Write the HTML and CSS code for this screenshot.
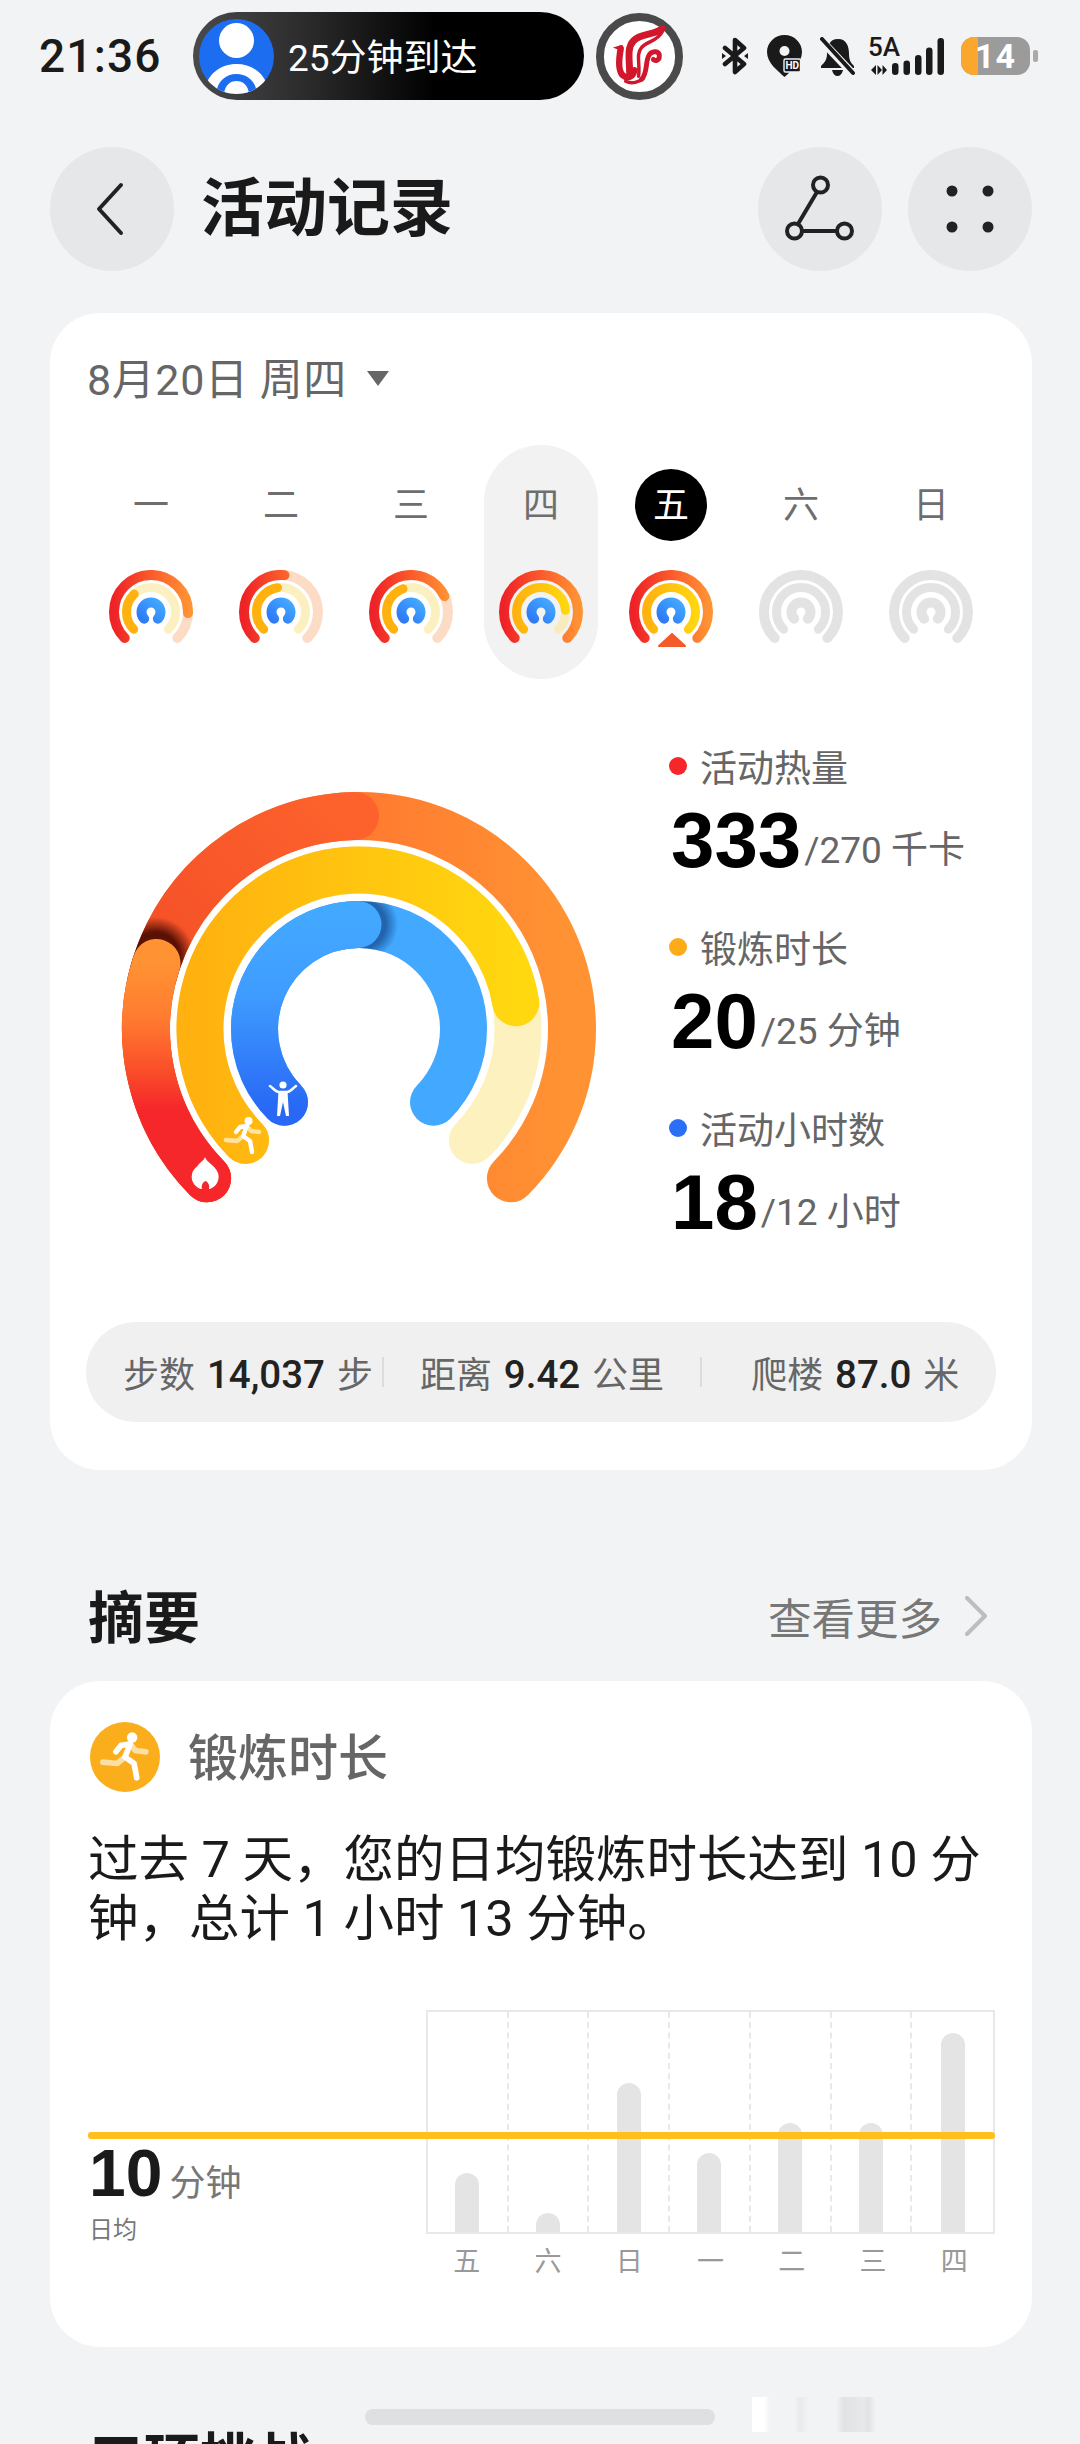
FILE: index.html
```html
<!DOCTYPE html>
<html lang="zh-CN">
<head>
    <meta charset="UTF-8">
    <meta name="viewport" content="width=device-width, initial-scale=1.0">
    <title>活动记录</title>
    <link rel="stylesheet" href="styles.css">
</head>
<body>
    <!-- shared shapes and gradients -->
    <svg class="defs" aria-hidden="true">
        <defs>
            <linearGradient id="mini-red" x1="0" y1="0" x2="1" y2="0">
                <stop offset="0" stop-color="#ee2327"/>
                <stop offset="0.5" stop-color="#fb5a2b"/>
                <stop offset="1" stop-color="#ff9233"/>
            </linearGradient>
            <linearGradient id="mini-yellow" x1="0" y1="0" x2="1" y2="0">
                <stop offset="0" stop-color="#ffb20f"/>
                <stop offset="1" stop-color="#ffd60f"/>
            </linearGradient>
            <linearGradient id="mini-blue" x1="0" y1="1" x2="1" y2="0">
                <stop offset="0" stop-color="#2f7bf6"/>
                <stop offset="1" stop-color="#43a8ff"/>
            </linearGradient>
            <path id="m-outer" pathLength="100" d="M18.7 68A37 37 0 1 1 71.3 68"/>
            <path id="m-middle" pathLength="100" d="M27.6 59.2A24.5 24.5 0 1 1 62.4 59.2"/>
            <path id="m-inner" d="M38.2 48.7A9.5 9.5 0 1 1 51.8 48.7"/>
            <symbol id="runner" viewBox="0 0 40 40">
                <g fill="none" stroke="#fff" stroke-width="4.4" stroke-linecap="round" stroke-linejoin="round">
                    <path d="M24 10L20 20M20 20L27 25L29 36M24 10L17 11L13 16"/>
                    <path opacity="0.6" d="M20 20L14 25L3 24M24 10L28 15L36 16"/>
                </g>
                <circle cx="25.5" cy="5" r="4" fill="#fff"/>
            </symbol>
        </defs>
    </svg>

    <div class="status-bar">
        <span class="clock">21:36</span>
        <div class="trip-pill">
            <svg class="trip-avatar" viewBox="0 0 75 75">
                <clipPath id="avatar-clip"><circle cx="37.5" cy="37.5" r="37.5"/></clipPath>
                <g clip-path="url(#avatar-clip)">
                    <rect width="75" height="75" fill="#1c6df0"/>
                    <circle cx="37.5" cy="21.5" r="17.5" fill="#fff"/>
                    <path fill="#fff" d="M4 75C8 54 22 45 37.5 45C53 45 67 54 71 75Z"/>
                    <path fill="#1c6df0" d="M17 75C18 62 27 55 37.5 55C48 55 57 62 58 75Z"/>
                    <path fill="#fff" d="M25 75C26 66 31 62 37.5 62C44 62 49 66 50 75Z"/>
                </g>
            </svg>
            <span class="trip-text">25分钟到达</span>
        </div>
        <div class="airline-badge">
            <svg viewBox="6 8 88 88" width="87" height="87">
                <circle cx="50" cy="52" r="40" fill="#fff" stroke="#4a4a4a" stroke-width="8"/>
                <g fill="none" stroke="#d2162b" stroke-linecap="round">
                    <path stroke-width="6.5" d="M31 44C29 55 28 66 33 71C38 75 43 73 45 66"/>
                    <path stroke-width="7" d="M40 68C40 55 37 43 44 36C52 28 64 31 73 24"/>
                    <path stroke-width="3.5" d="M49 72C51 60 46 50 52 43C58 36 68 37 73 27"/>
                    <path stroke-width="5" d="M52 75C58 70 56 58 59 52C62 45 71 46 70 52C70 56 66 57 64 55"/>
                    <path stroke-width="3.5" d="M36 77C42 80 50 78 54 74"/>
                </g>
                <path fill="#d2162b" d="M23 43L33 40L33 47Z"/>
            </svg>
        </div>
        <svg class="ic-bluetooth" viewBox="0 0 26 38">
            <path fill="none" stroke="#1a1a1a" stroke-width="4.6" stroke-linejoin="round" stroke-linecap="round" d="M3 11L22 27L13 35V3L22 11L3 27"/>
            <path fill="#1a1a1a" d="M0 16L4 19L0 22ZM26 16L22 19L26 22Z"/>
        </svg>
        <svg class="ic-location" viewBox="0 0 35 42">
            <path fill="#1a1a1a" d="M17.5 0C27 0 35 7.5 35 17C35 28 24 36 17.5 42C11 36 0 28 0 17C0 7.5 8 0 17.5 0Z"/>
            <circle cx="17.5" cy="16" r="5" fill="#f2f3f5"/>
            <rect x="17" y="24" width="16.5" height="13" rx="1.5" fill="#1a1a1a" stroke="#f2f3f5" stroke-width="1.4"/>
            <text x="25.2" y="34.2" class="hd-text">HD</text>
        </svg>
        <svg class="ic-bell" viewBox="0 0 35 39">
            <path fill="#1a1a1a" d="M18 2C9 2 7 10 7 17C7 23 4 26 1 29V31H34V29C31 26 29 23 29 17C29 10 27 2 18 2Z"/>
            <path fill="#1a1a1a" d="M12 33H23C22 37 20 39 17.5 39C15 39 13 37 12 33Z"/>
            <path stroke="#f2f3f5" stroke-width="8" d="M-1 1L34 38"/>
            <path stroke="#1a1a1a" stroke-width="4" stroke-linecap="round" d="M2 2L33 36"/>
        </svg>
        <svg class="ic-signal" viewBox="0 -8 78 48">
            <text x="0" y="20" class="net-text">5A</text>
            <path fill="#1a1a1a" d="M3 34L8 29V39ZM14 34L9.500 29V39ZM14.500 29L19 34L14.500 39Z"/>
            <rect x="24" y="27" width="6.500" height="12" rx="3.200" fill="#1a1a1a"/>
            <rect x="35.500" y="24.500" width="6.500" height="14.500" rx="3.200" fill="#1a1a1a"/>
            <rect x="47" y="19" width="6.500" height="20" rx="3.200" fill="#1a1a1a"/>
            <rect x="58" y="11.500" width="6.500" height="27.500" rx="3.200" fill="#1a1a1a"/>
            <rect x="69.500" y="2" width="6.500" height="37" rx="3.200" fill="#1a1a1a"/>
        </svg>
        <div class="battery">
            <div class="battery-fill"></div>
            <span class="battery-num">14</span>
        </div>
        <div class="battery-nub"></div>
    </div>

    <div class="nav-bar">
        <button class="round-btn back-btn">
            <svg width="32" height="54" viewBox="0 0 32 54"><path fill="none" stroke="#222" stroke-width="4" stroke-linecap="round" stroke-linejoin="round" d="M27 3L5 27L27 51"/></svg>
        </button>
        <h1 class="page-title">活动记录</h1>
        <button class="round-btn share-btn">
            <svg width="70" height="70" viewBox="0 0 70 70" fill="none" stroke="#222" stroke-width="4">
                <circle cx="35.500" cy="11" r="7.500"/>
                <circle cx="9.500" cy="57" r="7.500"/>
                <circle cx="59.500" cy="57" r="7.500"/>
                <path d="M32 18L13 50M17 57H52"/>
            </svg>
        </button>
        <button class="round-btn">
            <svg width="50" height="50" viewBox="0 0 50 50" fill="#222">
                <circle cx="7" cy="7" r="5.500"/><circle cx="43" cy="7" r="5.500"/>
                <circle cx="7" cy="43" r="5.500"/><circle cx="43" cy="43" r="5.500"/>
            </svg>
        </button>
    </div>

    <section class="card activity-card">
        <div class="date-row">
            <span>8月20日 周四</span>
            <span class="date-caret"></span>
        </div>

        <div class="week">
            <div class="day">
                <span class="day-label">一</span>
                <svg class="mini-ring" viewBox="0 0 90 84">
                    <use href="#m-outer" stroke="#fcdcc4"/>
                    <use href="#m-outer" stroke="url(#mini-red)" stroke-dasharray="84 100"/>
                    <use href="#m-middle" stroke="#fdf0c0" stroke-width="9"/>
                    <use href="#m-middle" stroke="#ffb20f" stroke-width="9" stroke-dasharray="34 100"/>
                    <use href="#m-inner" stroke="url(#mini-blue)" stroke-width="10"/>
                </svg>
            </div>
            <div class="day">
                <span class="day-label">二</span>
                <svg class="mini-ring" viewBox="0 0 90 84">
                    <use href="#m-outer" stroke="#fcdcc4"/>
                    <use href="#m-outer" stroke="url(#mini-red)" stroke-dasharray="52 100"/>
                    <use href="#m-middle" stroke="#fdf0c0" stroke-width="9"/>
                    <use href="#m-middle" stroke="#ffb20f" stroke-width="9" stroke-dasharray="47 100"/>
                    <use href="#m-inner" stroke="url(#mini-blue)" stroke-width="10"/>
                </svg>
            </div>
            <div class="day">
                <span class="day-label">三</span>
                <svg class="mini-ring" viewBox="0 0 90 84">
                    <use href="#m-outer" stroke="#fcdcc4"/>
                    <use href="#m-outer" stroke="url(#mini-red)" stroke-dasharray="74 100"/>
                    <use href="#m-middle" stroke="#fdf0c0" stroke-width="9"/>
                    <use href="#m-middle" stroke="#ffb20f" stroke-width="9" stroke-dasharray="43 100"/>
                    <use href="#m-inner" stroke="url(#mini-blue)" stroke-width="10"/>
                </svg>
            </div>
            <div class="day day-selected">
                <span class="day-label">四</span>
                <svg class="mini-ring" viewBox="0 0 90 84">
                    <use href="#m-outer" stroke="url(#mini-red)"/>
                    <use href="#m-middle" stroke="#f8ebbe" stroke-width="9"/>
                    <use href="#m-middle" stroke="url(#mini-yellow)" stroke-width="9" stroke-dasharray="82 100"/>
                    <use href="#m-inner" stroke="url(#mini-blue)" stroke-width="10"/>
                </svg>
            </div>
            <div class="day">
                <span class="day-label day-today">五</span>
                <svg class="mini-ring" viewBox="0 0 90 84">
                    <use href="#m-outer" stroke="url(#mini-red)"/>
                    <use href="#m-middle" stroke="url(#mini-yellow)" stroke-width="9"/>
                    <use href="#m-inner" stroke="url(#mini-blue)" stroke-width="10"/>
                    <path d="M46 64L59 76H33Z" fill="#f55a2b" stroke="#f55a2b" stroke-width="2" stroke-linejoin="round"/>
                </svg>
            </div>
            <div class="day">
                <span class="day-label">六</span>
                <svg class="mini-ring" viewBox="0 0 90 84">
                    <use href="#m-outer" stroke="#e3e3e3"/>
                    <use href="#m-middle" stroke="#e3e3e3" stroke-width="9"/>
                    <use href="#m-inner" stroke="#e3e3e3" stroke-width="10"/>
                </svg>
            </div>
            <div class="day">
                <span class="day-label">日</span>
                <svg class="mini-ring" viewBox="0 0 90 84">
                    <use href="#m-outer" stroke="#e3e3e3"/>
                    <use href="#m-middle" stroke="#e3e3e3" stroke-width="9"/>
                    <use href="#m-inner" stroke="#e3e3e3" stroke-width="10"/>
                </svg>
            </div>
        </div>

        <div class="rings-row">
            <svg class="big-rings" viewBox="0 0 480 420" fill="none" stroke-linecap="round">
                <defs>
                    <linearGradient id="r-base" gradientUnits="userSpaceOnUse" x1="240" y1="0" x2="440" y2="0">
                        <stop offset="0" stop-color="#ff7a30"/>
                        <stop offset="1" stop-color="#ff9233"/>
                    </linearGradient>
                    <linearGradient id="r-left" gradientUnits="userSpaceOnUse" x1="40" y1="200" x2="240" y2="30">
                        <stop offset="0" stop-color="#f44f28"/>
                        <stop offset="1" stop-color="#fd622c"/>
                    </linearGradient>
                    <linearGradient id="r-over" gradientUnits="userSpaceOnUse" x1="0" y1="174" x2="0" y2="320">
                        <stop offset="0" stop-color="#ff9233"/>
                        <stop offset="0.38" stop-color="#ff7b30"/>
                        <stop offset="0.72" stop-color="#fb5029"/>
                        <stop offset="1" stop-color="#f5272a"/>
                    </linearGradient>
                    <linearGradient id="r-yellow" gradientUnits="userSpaceOnUse" x1="80" y1="0" x2="400" y2="0">
                        <stop offset="0" stop-color="#ffb20f"/>
                        <stop offset="1" stop-color="#ffd80f"/>
                    </linearGradient>
                    <linearGradient id="r-blue" gradientUnits="userSpaceOnUse" x1="0" y1="320" x2="0" y2="130">
                        <stop offset="0" stop-color="#2868f5"/>
                        <stop offset="0.6" stop-color="#3f9cff"/>
                        <stop offset="1" stop-color="#43a8ff"/>
                    </linearGradient>
                    <radialGradient id="s-red">
                        <stop offset="0.62" stop-color="#4a0a00" stop-opacity="0.9"/>
                        <stop offset="1" stop-color="#4a0a00" stop-opacity="0"/>
                    </radialGradient>
                    <radialGradient id="s-blue">
                        <stop offset="0.66" stop-color="#123f80" stop-opacity="0.65"/>
                        <stop offset="1" stop-color="#123f80" stop-opacity="0"/>
                    </radialGradient>
                    <mask id="outer-mask" maskUnits="userSpaceOnUse" x="0" y="0" width="480" height="420">
                        <path stroke="#fff" stroke-width="48" d="M88.100 389.300A213 213 0 1 1 391.900 389.300"/>
                    </mask>
                    <mask id="inner-mask" maskUnits="userSpaceOnUse" x="0" y="0" width="480" height="420">
                        <path stroke="#fff" stroke-width="47" d="M165.500 313.200A104.500 104.500 0 1 1 314.500 313.200"/>
                    </mask>
                </defs>

                <!-- activity calories, more than one lap -->
                <path stroke="url(#r-base)" stroke-width="48" d="M88.100 389.300A213 213 0 1 1 391.900 389.300"/>
                <path stroke="url(#r-left)" stroke-width="48" d="M88.100 389.300A213 213 0 0 1 236 27"/>
                <g mask="url(#outer-mask)">
                    <circle cx="36" cy="168" r="40" fill="url(#s-red)"/>
                </g>
                <path stroke="url(#r-over)" stroke-width="48" d="M88.100 389.300A213 213 0 0 1 37.500 174"/>

                <!-- workout minutes -->
                <path stroke="#fdf1c0" stroke-width="47" d="M126.600 351.400A159 159 0 1 1 353.400 351.400"/>
                <path stroke="url(#r-yellow)" stroke-width="47" d="M126.600 351.400A159 159 0 1 1 396.800 213.700"/>

                <!-- active hours, more than one lap -->
                <path stroke="#43a8ff" stroke-width="47" d="M165.500 313.200A104.500 104.500 0 1 1 314.500 313.200"/>
                <g mask="url(#inner-mask)">
                    <circle cx="243" cy="135.500" r="36" fill="url(#s-blue)"/>
                </g>
                <path stroke="url(#r-blue)" stroke-width="47" d="M165.500 313.200A104.500 104.500 0 0 1 239 135.500"/>

                <path fill="#fff" d="M86 368C88 374 96 376 99 384C102 393 94 400 90 400C91 396 89 393 86.500 392C84 393 82 396 83 400C78 400 71 393 73 385C74 380 78 378 80 375C83 372 85 371 86 368Z"/>
                <use href="#runner" x="104" y="327" width="40" height="40"/>
                <circle cx="164" cy="296" r="3.600" fill="#fff"/>
                <path stroke="#fff" stroke-width="2.600" d="M151 297C155 300 157 303 160 303H168C171 303 173 300 177 297"/>
                <path fill="#fff" d="M159.500 302H168.500L170 327H167L164 313L161 327H158Z"/>
            </svg>

            <div class="goals">
                <div class="goal">
                    <div class="goal-name"><i class="dot dot-red"></i>活动热量</div>
                    <div class="goal-value">333<span class="goal-target">/270 千卡</span></div>
                </div>
                <div class="goal">
                    <div class="goal-name"><i class="dot dot-yellow"></i>锻炼时长</div>
                    <div class="goal-value">20<span class="goal-target">/25 分钟</span></div>
                </div>
                <div class="goal">
                    <div class="goal-name"><i class="dot dot-blue"></i>活动小时数</div>
                    <div class="goal-value">18<span class="goal-target">/12 小时</span></div>
                </div>
            </div>
        </div>

        <div class="totals">
            <div class="total">步数 <b>14,037</b> 步</div>
            <i class="total-sep sep-first"></i>
            <div class="total total-second">距离 <b>9.42</b> 公里</div>
            <i class="total-sep sep-second"></i>
            <div class="total total-third">爬楼 <b>87.0</b> 米</div>
        </div>
    </section>

    <div class="section-head">
        <h2 class="section-title">摘要</h2>
        <div class="more-link">
            <span>查看更多</span>
            <svg width="24" height="40" viewBox="0 0 24 40"><path fill="none" stroke="#bdbdbd" stroke-width="4" stroke-linecap="round" stroke-linejoin="round" d="M3 2L21 20L3 38"/></svg>
        </div>
    </div>

    <section class="card summary-card">
        <div class="summary-head">
            <span class="summary-icon"><svg width="52" height="52"><use href="#runner"/></svg></span>
            <span class="summary-title">锻炼时长</span>
        </div>
        <p class="summary-text">过去 7 天，您的日均锻炼时长达到 10 分<br>钟，总计 1 小时 13 分钟。</p>

        <div class="chart-row">
            <div class="avg-line"></div>
            <div class="avg-block">
                <div class="avg-value">10<span class="avg-unit">分钟</span></div>
                <div class="avg-label">日均</div>
            </div>
            <div class="chart">
                <div class="plot">
                    <div class="col"><div class="bar" style="height:59px"></div></div>
                    <div class="col"><div class="bar" style="height:19px"></div></div>
                    <div class="col"><div class="bar" style="height:149px"></div></div>
                    <div class="col"><div class="bar" style="height:79px"></div></div>
                    <div class="col"><div class="bar" style="height:109px"></div></div>
                    <div class="col"><div class="bar" style="height:109px"></div></div>
                    <div class="col"><div class="bar" style="height:199px"></div></div>
                </div>
                <div class="axis">
                    <span>五</span><span>六</span><span>日</span><span>一</span><span>二</span><span>三</span><span>四</span>
                </div>
            </div>
        </div>
    </section>

    <h2 class="section-title next-title">三环挑战</h2>

    <div class="home-bar"></div>
    <div class="blur-strip"></div>
</body>
</html>
```

FILE: styles.css
```css
* {
    box-sizing: border-box;
}

html, body {
    margin: 0;
    height: 2444px;
    overflow: hidden;
}

body {
    position: relative;
    width: 1080px;
    background: #f2f3f5;
    color: #1a1a1a;
    font-family: Roboto, "Noto Sans CJK SC", sans-serif;
}

.defs {
    position: absolute;
    width: 0;
    height: 0;
}

/* status bar */
.status-bar {
    display: flex;
    align-items: center;
    height: 112px;
    padding-left: 39px;
}

.clock {
    width: 122px;
    font-size: 46px;
    font-weight: 500;
    letter-spacing: 1.2px;
    color: #1a1a1a;
}

.trip-pill {
    display: flex;
    align-items: center;
    width: 391px;
    height: 88px;
    margin-left: 32px;
    padding-left: 6px;
    border-radius: 44px;
    background: linear-gradient(90deg, #4a4a4a 0%, #2a2a2a 30%, #000 62%);
}

.trip-avatar {
    width: 75px;
    height: 75px;
}

.trip-text {
    margin-left: 14px;
    padding-bottom: 2px;
    font-size: 37px;
    color: #fff;
}

.airline-badge {
    width: 87px;
    height: 87px;
    margin-left: 12px;
}

.ic-bluetooth {
    width: 26px;
    height: 38px;
    margin-left: 39px;
}

.ic-location {
    width: 35px;
    height: 42px;
    margin-left: 19px;
}

.hd-text {
    font-size: 10px;
    font-weight: 700;
    fill: #fff;
    text-anchor: middle;
}

.ic-bell {
    width: 35px;
    height: 39px;
    margin-left: 18px;
}

.ic-signal {
    width: 78px;
    height: 48px;
    margin-top: -8px;
    margin-left: 13px;
}

.net-text {
    font-size: 26px;
    font-weight: 500;
    fill: #1a1a1a;
}

.battery {
    position: relative;
    display: flex;
    justify-content: flex-end;
    align-items: center;
    width: 69px;
    height: 38px;
    margin-left: 15px;
    padding-right: 14px;
    border-radius: 13px;
    background: #9b9b9b;
    overflow: hidden;
}

.battery-fill {
    position: absolute;
    left: 0;
    top: 0;
    bottom: 0;
    width: 17px;
    background: #fba62c;
}

.battery-num {
    position: relative;
    font-size: 34px;
    font-weight: 700;
    line-height: 38px;
    letter-spacing: 1px;
    color: #fff;
}

.battery-nub {
    width: 5px;
    height: 12px;
    margin-left: 3px;
    border-radius: 2px;
    background: #aaa;
}

/* header */
.nav-bar {
    display: flex;
    align-items: center;
    height: 125px;
    margin-top: 34px;
    padding: 0 48px 0 50px;
}

.round-btn {
    display: flex;
    align-items: center;
    justify-content: center;
    width: 124px;
    height: 124px;
    padding: 0;
    border: 0;
    border-radius: 50%;
    background: #e6e7e9;
}

.back-btn {
    padding-right: 4px;
}

.page-title {
    flex: 1;
    margin: 0 0 0 27px;
    padding-bottom: 12px;
    font-size: 63px;
    font-weight: 700;
    color: #1a1a1a;
}

.share-btn {
    margin-right: 26px;
}

/* cards */
.card {
    width: 982px;
    margin: 0 0 0 50px;
    background: #fff;
    border-radius: 50px;
}

.activity-card {
    margin-top: 42px;
    padding: 40px 0 48px;
}

.date-row {
    display: flex;
    align-items: center;
    height: 50px;
    padding-left: 37px;
    padding-bottom: 4px;
    font-size: 43px;
    letter-spacing: 0.6px;
    color: #666;
}

.date-caret {
    width: 0;
    height: 0;
    margin-top: 4px;
    margin-left: 20px;
    border-style: solid;
    border-width: 15px 11px 0;
    border-color: #666 transparent transparent;
}

.week {
    display: grid;
    grid-template-columns: repeat(7, 130px);
    justify-content: center;
    margin-top: 42px;
}

.day {
    display: flex;
    flex-direction: column;
    align-items: center;
    justify-self: center;
    width: 114px;
    height: 234px;
    padding-top: 24px;
    border-radius: 57px;
}

.day-selected {
    background: #f2f2f2;
}

.day-label {
    width: 72px;
    height: 72px;
    border-radius: 50%;
    font-size: 36px;
    line-height: 74px;
    text-align: center;
    color: #6e6e6e;
}

.day-today {
    background: #000;
    color: #fff;
}

.mini-ring {
    flex: none;
    width: 90px;
    height: 84px;
    margin-top: 29px;
    fill: none;
    stroke-width: 10;
    stroke-linecap: round;
}

.rings-row {
    display: flex;
    align-items: flex-start;
    margin-top: 70px;
    padding-left: 69px;
}

.big-rings {
    flex: none;
    width: 480px;
    height: 420px;
    margin-top: 40px;
}

.goals {
    margin-top: -3px;
    margin-left: 70px;
}

.goal {
    height: 181px;
}

.goal-name {
    display: flex;
    align-items: center;
    height: 40px;
    font-size: 37px;
    color: #666;
}

.dot {
    width: 18px;
    height: 18px;
    margin-right: 13px;
    border-radius: 50%;
}

.dot-red {
    background: #f5272a;
}

.dot-yellow {
    background: #fdab18;
}

.dot-blue {
    background: #2a6ff5;
}

.goal-value {
    margin-top: 10px;
    margin-left: 2px;
    font-family: "Liberation Sans", sans-serif;
    font-size: 78px;
    font-weight: 700;
    line-height: 88px;
    color: #000;
}

.goal-target {
    margin-left: 3px;
    font-family: Roboto, "Noto Sans CJK SC", sans-serif;
    font-size: 37px;
    font-weight: 400;
    line-height: 1;
    vertical-align: 4px;
    color: #666;
}

.totals {
    display: flex;
    align-items: center;
    width: 910px;
    height: 100px;
    margin: 33px auto 0;
    padding-left: 37px;
    border-radius: 50px;
    background: #f0f0f0;
    font-size: 36px;
    word-spacing: 3px;
    color: #666;
    white-space: nowrap;
}

.total b {
    font-size: 38.500px;
    font-weight: 500;
    color: #222;
}

.total-sep {
    width: 2px;
    height: 30px;
    background: #dcdcdc;
}

.sep-first {
    margin-left: 9px;
}

.total-second {
    margin-left: 36px;
}

.sep-second {
    margin-left: 36px;
}

.total-third {
    margin-left: 49px;
}

/* summary */
.section-head {
    display: flex;
    align-items: center;
    justify-content: space-between;
    height: 70px;
    margin-top: 112px;
    padding: 0 92px 0 88px;
}

.section-head .section-title {
    padding-bottom: 8px;
}

.section-title {
    margin: 0;
    font-size: 56px;
    font-weight: 700;
    color: #1a1a1a;
}

.next-title {
    margin: 67px 0 0 88px;
}

.more-link {
    display: flex;
    align-items: center;
    gap: 22px;
    padding-bottom: 2px;
    font-size: 43.500px;
    color: #777;
}

.summary-card {
    height: 666px;
    margin-top: 29px;
    padding: 41px 37px 0 38px;
}

.summary-head {
    display: flex;
    align-items: center;
    height: 70px;
}

.summary-icon {
    display: flex;
    align-items: center;
    justify-content: center;
    width: 70px;
    height: 70px;
    margin-left: 2px;
    border-radius: 50%;
    background: #fbae1c;
}

.summary-title {
    margin-left: 28px;
    padding-bottom: 7px;
    font-size: 50px;
    font-weight: 500;
    color: #666;
}

.summary-text {
    margin: 38px 0 0;
    font-size: 50.500px;
    line-height: 59px;
    color: #1a1a1a;
    white-space: nowrap;
}

.chart-row {
    position: relative;
    display: flex;
    justify-content: space-between;
    margin-top: 62px;
}

.avg-line {
    position: absolute;
    left: 0;
    right: 0;
    top: 122px;
    height: 7px;
    border-radius: 3px;
    background: #ffc01e;
}

.avg-block {
    padding-top: 133px;
}

.avg-value {
    margin-left: 1px;
    font-family: "Liberation Sans", sans-serif;
    font-size: 66px;
    font-weight: 700;
    line-height: 60px;
}

.avg-unit {
    margin-left: 7px;
    font-family: Roboto, "Noto Sans CJK SC", sans-serif;
    font-size: 36px;
    font-weight: 400;
    line-height: 1;
    color: #777;
}

.avg-label {
    margin-top: 11px;
    margin-left: 1px;
    font-size: 24px;
    line-height: 32px;
    color: #777;
}

.chart {
    width: 569px;
}

.plot {
    display: grid;
    grid-template-columns: repeat(7, 1fr);
    height: 224px;
    border: 2px solid #e8e8e8;
}

.col {
    display: flex;
    align-items: flex-end;
    justify-content: center;
    border-right: 2px dashed #e8e8e8;
}

.col:last-child {
    border-right: 0;
}

.bar {
    width: 24px;
    border-radius: 12px 12px 0 0;
    background: #e4e4e4;
}

.axis {
    display: grid;
    grid-template-columns: repeat(7, 1fr);
    margin-top: 12px;
    font-size: 27px;
    line-height: 32px;
    text-align: center;
    color: #999;
}

/* bottom overlays */
.home-bar {
    position: absolute;
    left: 365px;
    top: 2409px;
    width: 350px;
    height: 16px;
    border-radius: 8px;
    background: #dfe0e2;
}

.blur-strip {
    position: absolute;
    left: 752px;
    top: 2397px;
    width: 290px;
    height: 35px;
    background: linear-gradient(90deg, #fff 0, #fff 12px, #f2f3f5 18px, #f2f3f5 42px, #e9eaec 48px, #f2f3f5 56px, #f2f3f5 84px, #e1e2e4 92px, #e8e9eb 112px, #e1e2e4 116px, #f2f3f5 124px, #f2f3f5 290px);
}
```
